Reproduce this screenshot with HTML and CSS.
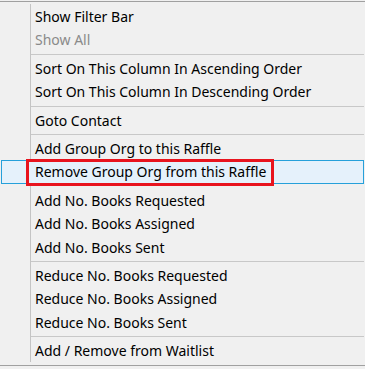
FILE: index.html
```html
<!DOCTYPE html>
<html lang="en">
<head>
  <meta charset="UTF-8" />
  <title>Context Menu</title>
  <link rel="stylesheet" href="styles.css">
</head>
<body>
  <div class="frame">
    <ul class="menu">
      <li class="item">Show Filter Bar</li>
      <li class="item disabled">Show All</li>
      <li class="sep"></li>
      <li class="item">Sort On This Column In Ascending Order</li>
      <li class="item">Sort On This Column In Descending Order</li>
      <li class="sep"></li>
      <li class="item">Goto Contact</li>
      <li class="sep"></li>
      <li class="item">Add Group Org to this Raffle</li>
      <li class="item active"><span class="mark"></span>Remove Group Org from this Raffle</li>
      <li class="sep blank"></li>
      <li class="item">Add No. Books Requested</li>
      <li class="item">Add No. Books Assigned</li>
      <li class="item">Add No. Books Sent</li>
      <li class="sep"></li>
      <li class="item">Reduce No. Books Requested</li>
      <li class="item">Reduce No. Books Assigned</li>
      <li class="item">Reduce No. Books Sent</li>
      <li class="sep"></li>
      <li class="item">Add / Remove from Waitlist</li>
    </ul>
  </div>
</body>
</html>
```

FILE: styles.css
```css
body {
  margin: 0;
  padding-top: 1px;
  background: #f0f0f0;
  font-family: 'Noto Sans', 'Open Sans', sans-serif;
  font-size: 14px;
  color: #000;
}

.frame {
  border-top: 1px solid #a0a0a0;
  border-bottom: 1px solid #a0a0a0;
  padding: 2px 0 3px;
  height: 358px;
}

.menu {
  list-style: none;
  margin: 0 1px 0 30px;
  padding: 1px 0 0;
  border-left: 1px solid #c4c4c4;
}

.item {
  position: relative;
  height: 23.4px;
  line-height: 23.4px;
  padding-left: 4px;
  white-space: nowrap;
}

.disabled {
  color: #8a8a8a;
}

.sep {
  height: 5px;
  position: relative;
}
.sep::after {
  content: "";
  position: absolute;
  left: 0;
  right: 0;
  top: 2px;
  height: 1px;
  background: #c8c8c8;
}
.sep.blank::after {
  display: none;
}

.active {
  margin-left: -30px;
  padding-left: 33px;
  background: #e5f1fb;
  border: 1px solid #26a0da;
  height: 21.4px;
  line-height: 21.4px;
}

.mark {
  position: absolute;
  left: 24px;
  top: -2px;
  width: 242px;
  height: 21px;
  border: 3px solid #e8141e;
}
```
